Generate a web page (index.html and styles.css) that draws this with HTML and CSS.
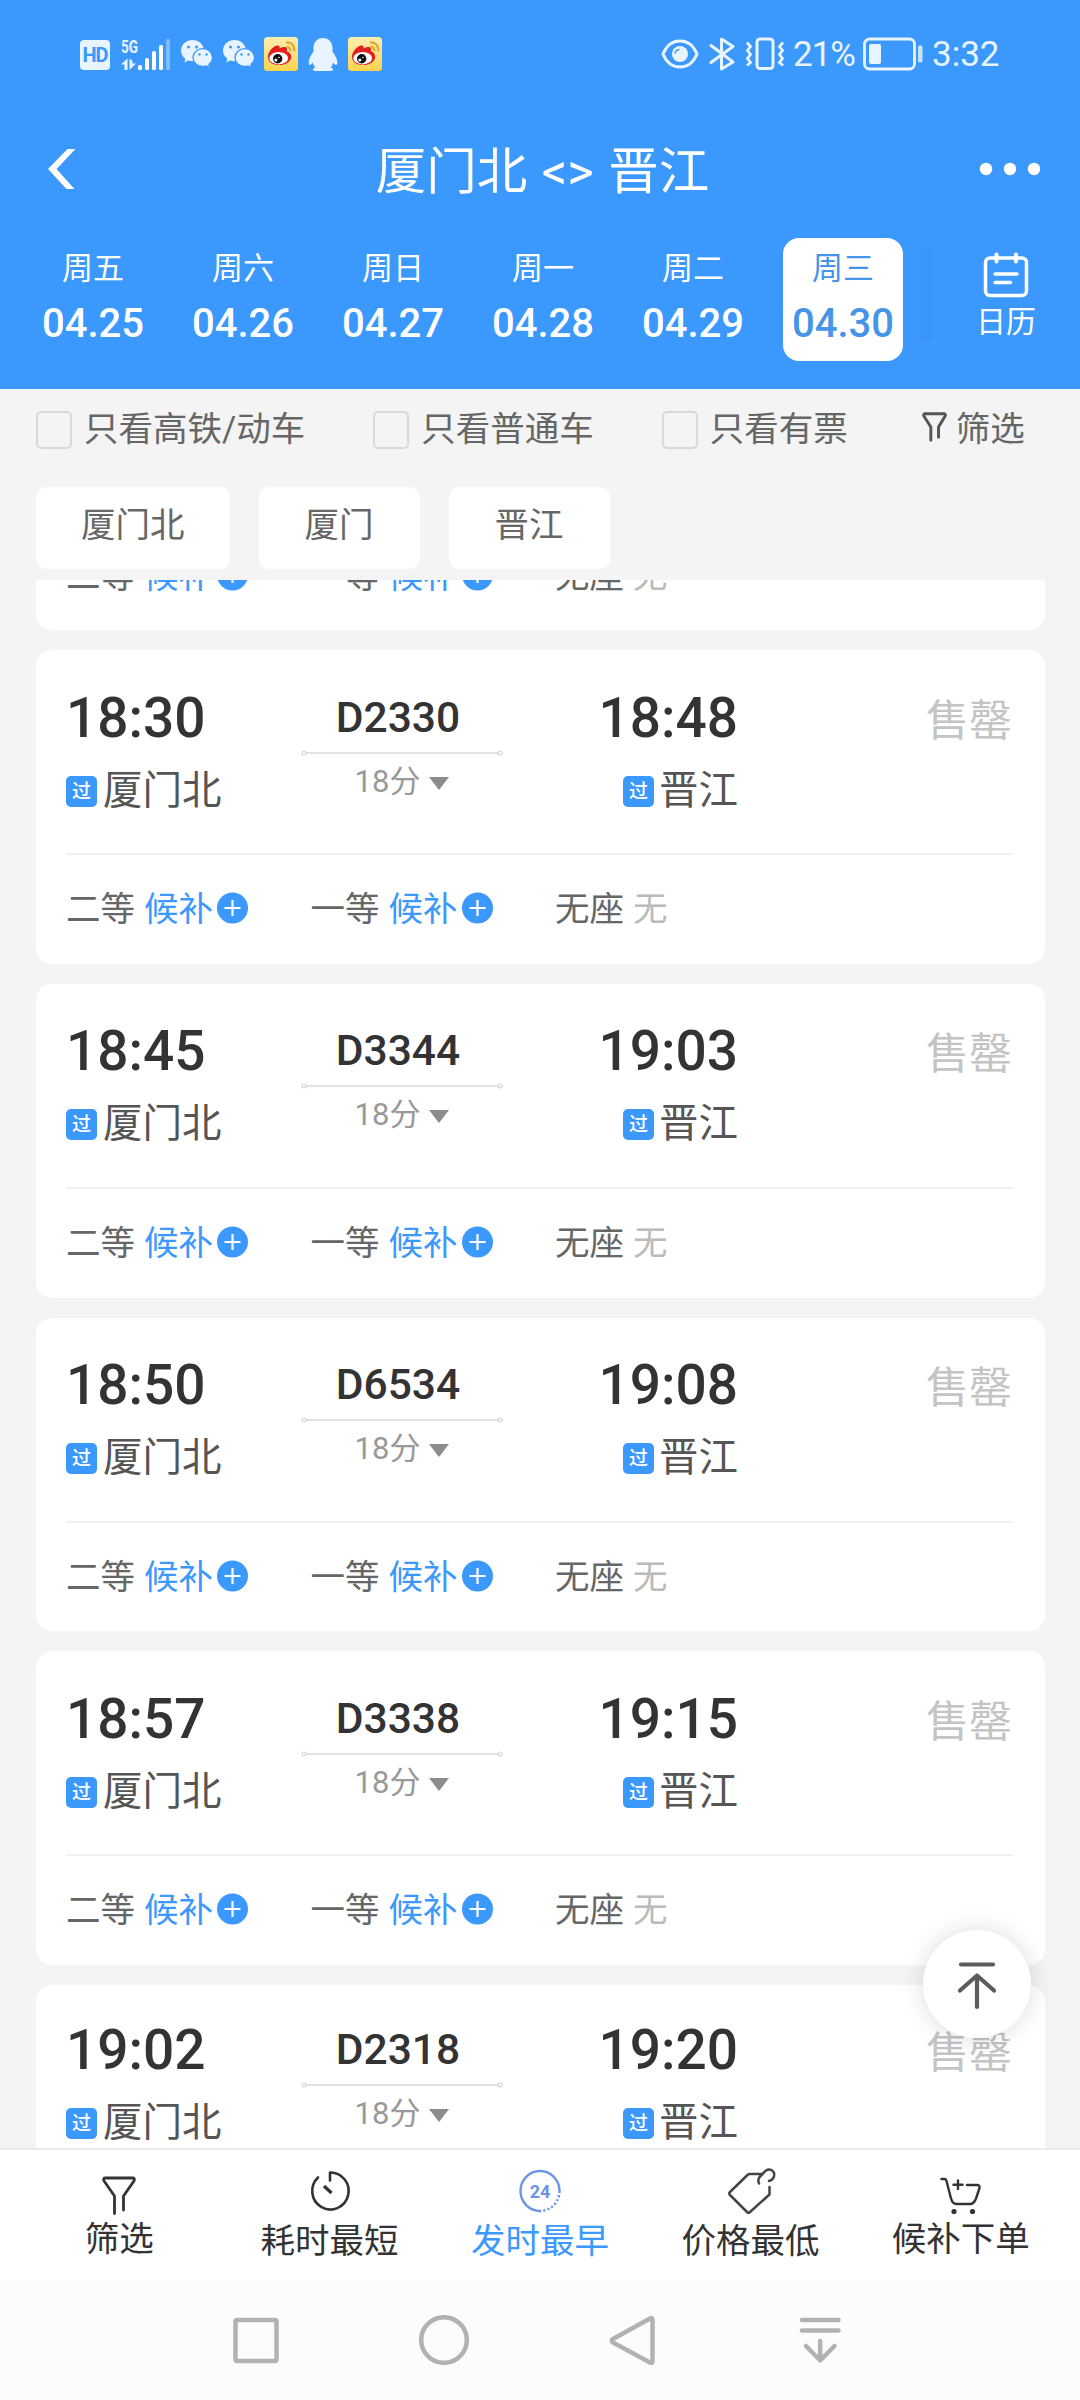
FILE: index.html
```
<!DOCTYPE html>
<html lang="zh-CN">

<head>
    <meta charset="UTF-8">
    <meta name="viewport" content="width=device-width, initial-scale=1.0">
    <title>厦门北 - 晋江</title>
    <link rel="stylesheet" href="styles.css">
</head>

<body>
    <svg class="symbols" width="0" height="0">
        <symbol id="wechat" viewBox="0 0 32 28">
            <path fill="#e8f4ff" d="M11.500 0C5.200 0 0 4.600 0 10.600c0 3.400 1.700 6.300 4.300 8.200L3.300 22.500l4-2c1.400.5 2.700.7 4.200.7 6.300 0 11.500-4.700 11.500-10.600S17.800 0 11.500 0z" />
            <circle cx="7.500" cy="7" r="1.500" fill="#3b98fc" />
            <circle cx="15.500" cy="7" r="1.500" fill="#3b98fc" />
            <path fill="#e8f4ff" stroke="#3b98fc" stroke-width="1.300" d="M21.800 8.600c-5.400 0-9.800 3.900-9.800 8.900s4.400 9 9.800 9c1.300 0 2.300-.2 3.500-.6l3.400 1.800-.8-3.300c2.200-1.600 3.600-4 3.600-6.900 0-5-4.300-8.900-9.700-8.900z" />
            <circle cx="18.500" cy="14.500" r="1.200" fill="#3b98fc" />
            <circle cx="25.500" cy="14.500" r="1.200" fill="#3b98fc" />
        </symbol>
        <symbol id="weibo" viewBox="0 0 34 34">
            <defs>
                <linearGradient id="weiboBg" x1="0" y1="0" x2="0" y2="1">
                    <stop offset="0" stop-color="#fbeeb4" />
                    <stop offset="1" stop-color="#fdd24c" />
                </linearGradient>
            </defs>
            <rect width="34" height="34" rx="3.500" fill="url(#weiboBg)" />
            <path fill="#e21f1f" d="M4 20c0-5 4.500-10.500 9-11.500 2-.5 3.200 1 2.600 3 2.800-1.600 6.800-2.300 7.400.2.300 1-.2 2-.2 2.600 2.500.8 4.400 2.500 4.400 5.400 0 5-5.700 8.300-12 8.300C8.500 28 4 25 4 20z" />
            <ellipse cx="14.700" cy="21.200" rx="9.300" ry="6.200" fill="#fff" />
            <circle cx="13.700" cy="21.700" r="4.700" fill="#111" />
            <circle cx="11.900" cy="23.100" r="1.500" fill="#fff" />
            <circle cx="15" cy="20.500" r=".8" fill="#fff" />
            <path fill="none" stroke="#e0a930" stroke-width="2.200" d="M22 5.500c5-.8 9 3.200 8.200 9M22.500 10c2.600-.4 4.200 1.600 3.800 4.200" />
        </symbol>
        <symbol id="funnel" viewBox="0 0 34 40">
            <path fill="none" stroke="currentColor" stroke-width="2.800" stroke-linejoin="round" stroke-linecap="round" d="M12.500 37.500V20L1.900 4.800Q.9 2 3.500 2h27q2.600 0 1.600 2.800L21.500 20v14" />
        </symbol>
        <symbol id="line" viewBox="0 0 202 6">
            <path d="M5 3h192" stroke="#d8d8d8" stroke-width="1.500" />
            <circle cx="3" cy="3" r="2" fill="#fff" stroke="#d3d3d3" stroke-width="1.200" />
            <circle cx="199" cy="3" r="2" fill="#fff" stroke="#d3d3d3" stroke-width="1.200" />
        </symbol>
        <symbol id="plus" viewBox="0 0 31 31">
            <circle cx="15.500" cy="15.500" r="15.500" fill="#3b98fc" />
            <path d="M15.500 7.500v16M7.500 15.500h16" stroke="#fff" stroke-width="2.200" />
        </symbol>
    </svg>

    <header class="header">
        <div class="status-bar">
            <div class="status-left">
                <span class="hd">HD</span>
                <svg class="signal" width="50" height="34" viewBox="0 0 50 34">
                    <text x="0" y="15.500" textLength="17" lengthAdjust="spacingAndGlyphs" class="signal-text">5G</text>
                    <path fill="#e8f4ff" d="M0 27.500L6.500 21.500V33H3.500V27.500zM8.500 21.500L11.500 24V26.500H15L8.500 33z" />
                    <rect x="17" y="28" width="4" height="5" rx="1.500" fill="#fff" />
                    <rect x="24" y="21" width="4" height="12" rx="1.500" fill="#fff" />
                    <rect x="31" y="14" width="4" height="19" rx="1.500" fill="#fff" />
                    <rect x="38" y="8" width="4" height="25" rx="1.500" fill="#fff" />
                    <rect x="45" y="2" width="4" height="31" rx="1.500" fill="#7fbcfd" />
                </svg>
                <svg class="wechat" width="32" height="28"><use href="#wechat" /></svg>
                <svg class="wechat" width="32" height="28"><use href="#wechat" /></svg>
                <svg class="weibo" width="34" height="34"><use href="#weibo" /></svg>
                <svg class="qq" width="30" height="33" viewBox="0 0 30 33">
                    <path fill="#e8f4ff" d="M15 0C9 0 5.500 4.500 5.500 10v3.500C3 17 .7 21 .7 24.500c0 1.300.5 2.500 1.300 2.500.9 0 1.800-1 2.700-2.500.5 2 1.400 3.600 2.700 5-1.800.5-2.700 1.200-2.700 2 0 1 2 1.500 5 1.500h10.600c3 0 5-.5 5-1.500 0-.8-.9-1.500-2.700-2 1.300-1.400 2.200-3 2.700-5 .9 1.500 1.800 2.500 2.700 2.500.8 0 1.300-1.200 1.300-2.500 0-3.500-2.300-7.500-4.800-11V10C24.500 4.500 21 0 15 0z" />
                </svg>
                <svg class="weibo" width="34" height="34"><use href="#weibo" /></svg>
            </div>
            <div class="status-right">
                <svg class="eye" width="38" height="30" viewBox="0 0 38 30">
                    <path fill="none" stroke="#e8f4ff" stroke-width="3" d="M2 15C5.500 6.500 11.500 2 19 2s13.500 4.500 17 13c-3.500 8.500-9.500 13-17 13S5.500 23.500 2 15z" />
                    <circle cx="19" cy="15" r="8" fill="#e8f4ff" />
                    <path fill="none" stroke="#3b98fc" stroke-width="1.500" d="M14 14.500a5 5 0 0 1 4.500-4" />
                </svg>
                <svg class="bluetooth" width="26" height="34" viewBox="0 0 26 34">
                    <path fill="none" stroke="#e8f4ff" stroke-width="3" stroke-linejoin="round" stroke-linecap="round" d="M2 8.500L24 25 12.500 32V2L24 9.500 2 25.500" />
                </svg>
                <svg class="vibrate" width="40" height="34" viewBox="0 0 40 34">
                    <rect x="12" y="2" width="16" height="29.500" rx="3" fill="none" stroke="#e8f4ff" stroke-width="3" />
                    <path fill="none" stroke="#e8f4ff" stroke-width="2.800" d="M2 5.500l3.500 4-3 4 3 4-3 4 3 4-3.500 3M38 5.500l-3.500 4 3 4-3 4 3 4-3 4 3.500 3" />
                </svg>
                <span class="percent">21%</span>
                <svg class="battery" width="60" height="34" viewBox="0 0 60 34">
                    <rect x="1.500" y="2" width="50" height="30" rx="5" fill="none" stroke="#e8f4ff" stroke-width="2.800" />
                    <rect x="6" y="7" width="12" height="20" rx="2" fill="#e8f4ff" />
                    <rect x="55" y="8.500" width="4.500" height="17" rx="1.500" fill="#c9e2fe" />
                </svg>
                <span class="clock">3:32</span>
            </div>
        </div>

        <div class="title-bar">
            <svg width="28" height="42" viewBox="0 0 28 42">
                <path fill="#fff" d="M19.500 1H27.500L8.500 21 26.500 41H18.500L0 21z" />
            </svg>
            <h1>厦门北 &lt;&gt; 晋江</h1>
            <svg width="62" height="14" viewBox="0 0 62 14">
                <circle cx="7" cy="7" r="6.200" fill="#fff" />
                <circle cx="31" cy="7" r="6.200" fill="#fff" />
                <circle cx="55" cy="7" r="6.200" fill="#fff" />
            </svg>
        </div>

        <div class="dates">
            <div class="date"><span>周五</span><b>04.25</b></div>
            <div class="date"><span>周六</span><b>04.26</b></div>
            <div class="date"><span>周日</span><b>04.27</b></div>
            <div class="date"><span>周一</span><b>04.28</b></div>
            <div class="date"><span>周二</span><b>04.29</b></div>
            <div class="date active"><span>周三</span><b>04.30</b></div>
            <div class="shade"></div>
            <div class="calendar">
                <svg width="46" height="46" viewBox="0 0 46 46">
                    <rect x="2.500" y="6" width="41" height="37.500" rx="4.500" fill="none" stroke="#fff" stroke-width="3.500" />
                    <path stroke="#fff" stroke-width="4" stroke-linecap="round" d="M13.500 2.500v7M33 2.500v7" />
                    <path stroke="#fff" stroke-width="3.500" stroke-linecap="round" d="M12 22h22M12 30.500h15.500" />
                </svg>
                <span>日历</span>
            </div>
        </div>
    </header>

    <div class="filters">
        <label class="filter"><i class="box"></i>只看高铁/动车</label>
        <label class="filter"><i class="box"></i>只看普通车</label>
        <label class="filter"><i class="box"></i>只看有票</label>
        <div class="filter more">
            <svg width="25" height="30" viewBox="0 0 34 40">
                <path fill="none" stroke="#555" stroke-width="4" stroke-linejoin="round" stroke-linecap="round" d="M12 38V20L2.500 5Q1.500 2 4.500 2h25q3 0 2 3L22.500 20v14" />
            </svg>筛选
        </div>
    </div>

    <div class="chips">
        <div class="chip">厦门北</div>
        <div class="chip">厦门</div>
        <div class="chip">晋江</div>
    </div>

    <main class="list">
        <div class="list-inner" id="trains"></div>
        <div class="to-top">
            <svg width="42" height="54" viewBox="0 0 42 54">
                <path fill="none" stroke="#5c5c5c" stroke-width="4.200" stroke-linecap="round" stroke-linejoin="round" d="M5 7.500h32M21 50V19M4 33.500L21 18.500l17 15" />
            </svg>
        </div>
    </main>

    <footer class="tabs">
        <div class="tab">
            <svg class="i-funnel" width="34" height="40"><use href="#funnel" /></svg>
            <span>筛选</span>
        </div>
        <div class="tab low">
            <svg width="48" height="48" viewBox="0 0 48 48">
                <path fill="none" stroke="#333" stroke-width="2.600" stroke-linecap="round" stroke-linejoin="round" d="M24 12.500V4.500A18.200 18.500 0 1 1 12 9.500" />
                <path stroke="#333" stroke-width="3.200" d="M18 18l7.500 7" />
            </svg>
            <span>耗时最短</span>
        </div>
        <div class="tab low active">
            <svg width="48" height="48" viewBox="0 0 48 48">
                <path fill="none" stroke="#6d93e8" stroke-width="2.400" d="M24 43A19.500 20 0 1 1 43.500 23" />
                <path fill="none" stroke="#6d93e8" stroke-width="2.400" stroke-dasharray="2.200 2" d="M43.500 23A19.500 20 0 0 1 24 43" />
                <text x="24" y="29.500" text-anchor="middle" class="hours">24</text>
            </svg>
            <span>发时最早</span>
        </div>
        <div class="tab low">
            <svg width="48" height="48" viewBox="0 0 48 48">
                <path fill="none" stroke="#444" stroke-width="2.500" stroke-linecap="round" stroke-linejoin="round" d="M36 6H23.500Q22.500 6 21.500 7L4 24q-1.500 1.500 0 3L21 44q1.500 1.500 3 0L43.500 26.500V19M33 15.500C31 10.500 34 8.500 37 5.500 40 1.500 43 .5 46 2.500s2.500 5.500 1 8c-1 1.500-2.500 2.200-4 2.500" />
            </svg>
            <span>价格最低</span>
        </div>
        <div class="tab">
            <svg class="i-cart" width="42" height="38" viewBox="0 0 42 38">
                <path fill="none" stroke="#333" stroke-width="2.400" stroke-linecap="round" stroke-linejoin="round" d="M1.500 2H5Q6 2 6.500 4L11 21.500q1.500 5.500 5.500 5.500h13.500q4 0 6-5.500l3.500-10.500q.5-3-2.500-3H27M18 3.500v8.500M13.500 7.700h9" />
                <circle cx="14" cy="34.500" r="2.600" fill="#333" />
                <circle cx="32.500" cy="34.500" r="2.600" fill="#333" />
            </svg>
            <span>候补下单</span>
        </div>
    </footer>

    <nav class="sys-nav">
        <svg width="50" height="50" viewBox="0 0 50 50"><rect x="4.500" y="5" width="41" height="41" rx="1.500" /></svg>
        <svg width="50" height="50" viewBox="0 0 50 50"><circle cx="25" cy="25" r="22.800" /></svg>
        <svg width="50" height="50" viewBox="0 0 50 50"><path d="M43 3.500Q45.500 2 45.500 5v41q0 3-2.500 1.500L6 27.500Q3.500 25.500 6 24z" /></svg>
        <svg width="50" height="50" viewBox="0 0 50 50"><path d="M7 5h36.500M7 15.500h36.500M25.200 26v19M11 31l14.200 14.500L39.500 31" /></svg>
    </nav>

    <script>
        const trains = [
            { no: 'D2330', start: '18:30', end: '18:48' },
            { no: 'D3344', start: '18:45', end: '19:03' },
            { no: 'D6534', start: '18:50', end: '19:08' },
            { no: 'D3338', start: '18:57', end: '19:15' },
            { no: 'D2318', start: '19:02', end: '19:20' }
        ];

        const plus = '<svg width="31" height="32"><use href="#plus" /></svg>';

        const seats = `
            <div class="seats">
                <div class="seat">二等<span class="wait">候补</span>${plus}</div>
                <div class="seat">一等<span class="wait">候补</span>${plus}</div>
                <div class="seat">无座<span class="none">无</span></div>
            </div>`;

        const trip = t => `
            <div class="trip">
                <div class="stop">
                    <div class="time">${t.start}</div>
                    <div class="station"><i class="pass">过</i>厦门北</div>
                </div>
                <div class="middle">
                    <div class="no">${t.no}</div>
                    <svg width="202" height="6"><use href="#line" /></svg>
                    <div class="duration">18分<i class="arrow"></i></div>
                </div>
                <div class="stop end">
                    <div class="time">${t.end}</div>
                    <div class="station"><i class="pass">过</i>晋江</div>
                </div>
                <div class="sold-out">售罄</div>
            </div>`;

        // 首尾两张卡片只渲染可见的一半
        document.getElementById('trains').innerHTML =
            `<div class="card half">${seats}</div>` +
            trains.map((t, i) => `
                <div class="card">
                    ${trip(t)}
                    ${i < trains.length - 1 ? seats : ''}
                </div>
            `).join('');
    </script>
</body>

</html>
```
FILE: styles.css
```
* {
    box-sizing: border-box;
}

body {
    width: 1080px;
    height: 2400px;
    margin: 0;
    display: flex;
    flex-direction: column;
    overflow: hidden;
    background-color: #f4f4f4;
    color: #333;
    font-family: Roboto, "Noto Sans CJK SC", sans-serif;
}

svg {
    display: block;
    flex: none;
}

i {
    font-style: normal;
}

.symbols {
    position: absolute;
}

/* 顶部 */
.header {
    height: 389px;
    background-color: #3b98fc;
    color: #fff;
}

.status-bar {
    height: 108px;
    padding: 0 80px;
    display: flex;
    justify-content: space-between;
    align-items: center;
    color: #e8f4ff;
}

.status-left,
.status-right {
    display: flex;
    align-items: center;
}

.hd {
    width: 30px;
    height: 30px;
    margin: 2px 11px 0 0;
    border-radius: 4px;
    background-color: #e8f4ff;
    color: #3b98fc;
    font-size: 20px;
    font-weight: 700;
    line-height: 30px;
    text-align: center;
    letter-spacing: -1px;
}

.signal {
    margin-right: 10px;
}

.signal-text {
    font-size: 19px;
    font-weight: 700;
    fill: #e8f4ff;
}

.wechat {
    margin-right: 10px;
}

.wechat + .weibo {
    margin: 0 10px 0 -1px;
}

.qq {
    margin-right: 10px;
}

.eye {
    margin-right: 10px;
}

.bluetooth {
    margin-right: 10px;
}

.vibrate {
    margin-right: 8px;
}

.percent,
.clock {
    margin-top: 2px;
    font-size: 35px;
    line-height: 40px;
}

.percent {
    width: 70px;
    letter-spacing: -1px;
}

.battery {
    margin-right: 9px;
}

.clock {
    width: 68px;
    white-space: nowrap;
}

.title-bar {
    height: 122px;
    padding: 0 39px 0 48px;
    display: flex;
    align-items: center;
    justify-content: space-between;
}

h1 {
    margin: 6px 0 0 30px;
    font-size: 50.5px;
    font-weight: 400;
    line-height: 60px;
    word-spacing: 2px;
}

.dates {
    height: 159px;
    padding: 8px 0 0 33px;
    display: flex;
    align-items: flex-start;
}

.date {
    width: 120px;
    height: 123px;
    margin-right: 30px;
    padding-top: 12px;
    display: flex;
    flex-direction: column;
    align-items: center;
    border-radius: 16px;
}

.date span {
    font-size: 31px;
    line-height: 38px;
}

.date b {
    margin-top: 13px;
    font-size: 40px;
    font-weight: 500;
    line-height: 46px;
}

.date.active {
    margin-right: 15px;
    background-color: #fff;
    color: #4694e8;
}

.shade {
    width: 14px;
    height: 92px;
    margin-top: 11px;
    background: linear-gradient(to right, #3b98fc, #3a92f3);
}

.calendar {
    margin: 14px 0 0 44px;
    display: flex;
    flex-direction: column;
    align-items: center;
}

.calendar span {
    margin-top: 6px;
    font-size: 30px;
    line-height: 36px;
}

/* 筛选条件 */
.filters {
    height: 98px;
    padding: 0 50px 0 36px;
    display: flex;
    align-items: flex-start;
    color: #666;
    font-size: 34.5px;
    line-height: 42px;
}

.filter {
    display: flex;
    padding-top: 19px;
    margin-right: 68px;
    white-space: nowrap;
}

.filter.more {
    margin: 0 0 0 6px;
}

.filter.more svg {
    margin: 4px 9px 0 0;
}

.box {
    width: 36px;
    height: 38px;
    margin: 3px 12px 0 0;
    border: 2px solid #d9d9d9;
    border-radius: 5px;
}

.chips {
    height: 93px;
    padding-left: 36px;
    display: flex;
}

.chip {
    height: 82px;
    min-width: 161px;
    margin-right: 29px;
    padding: 0 45px;
    border-radius: 10px;
    background-color: #fff;
    color: #666;
    font-size: 34.5px;
    line-height: 77px;
    text-align: center;
}

/* 车次列表 */
.list {
    position: relative;
    height: 1568px;
    overflow: hidden;
}

.list-inner {
    padding: 0 35px 0 36px;
}

.card {
    height: 313.6px;
    margin-bottom: 20px;
    padding: 0 32px 0 30px;
    border-radius: 16px;
    background-color: #fff;
}

.card.half {
    height: 50.4px;
    display: flex;
    align-items: flex-end;
    border-radius: 0 0 16px 16px;
}

.trip {
    height: 205px;
    padding-top: 35.5px;
    display: flex;
    border-bottom: 2px solid #f1f1f1;
}

.card:last-child .trip {
    padding-top: 33px;
}

.stop {
    width: 235px;
}

.stop.end {
    display: flex;
    flex-direction: column;
    align-items: flex-end;
}

.time {
    font-size: 55px;
    font-weight: 500;
    line-height: 64px;
}

.station {
    margin-top: 19px;
    display: flex;
    color: #555;
    font-size: 39.5px;
    line-height: 44px;
}

.pass {
    width: 31px;
    height: 31px;
    margin: 7px 6px 0 0;
    border-radius: 5px;
    background-color: #3b98fc;
    color: #fff;
    font-size: 19px;
    font-weight: 500;
    line-height: 32px;
    text-align: center;
}

.end .pass {
    margin-right: 5px;
}

.middle {
    width: 202px;
    text-align: center;
}

.no {
    padding-right: 8px;
    font-size: 42.5px;
    font-weight: 500;
    line-height: 64px;
}

.duration {
    margin-top: 8px;
    display: flex;
    justify-content: center;
    align-items: center;
    color: #999;
    font-size: 31px;
    line-height: 36px;
}

.arrow {
    margin: 3px 0 0 9px;
    border: 10px solid transparent;
    border-top: 13px solid #8c8c8c;
    border-bottom: 0;
}

.sold-out {
    margin: 3px 1px 0 auto;
    color: #c4c4c4;
    font-size: 43px;
    line-height: 64px;
}

.seats {
    height: 108px;
    flex: none;
    display: flex;
    color: #666;
    font-size: 34.5px;
    line-height: 42px;
}

.seat {
    width: 244.5px;
    display: flex;
    align-items: center;
}

.seat svg {
    margin: 0 0 2px 4px;
}

.wait,
.none {
    margin-left: 9px;
}

.wait {
    color: #3b98fc;
}

.none {
    color: #bbb;
}

.to-top {
    position: absolute;
    right: 49px;
    bottom: 110px;
    width: 108px;
    height: 108px;
    display: flex;
    align-items: center;
    justify-content: center;
    border-radius: 50%;
    background-color: #fff;
    box-shadow: 0 0 24px rgba(0, 0, 0, 0.14);
}

/* 底部排序 */
.tabs {
    height: 133px;
    padding: 0 14px;
    display: flex;
    border-top: 2px solid #eaeaea;
    background-color: #fff;
}

.tab {
    flex: 1;
    display: flex;
    flex-direction: column;
    align-items: center;
    justify-content: flex-end;
    padding-bottom: 21px;
    font-size: 34.5px;
    line-height: 42px;
}

.tab.low {
    padding-bottom: 19px;
}

.tab.low svg {
    margin-bottom: 4px;
    overflow: visible;
}

.tab.active {
    color: #3b98fc;
}

.i-funnel {
    margin-bottom: 2px;
}

.i-cart {
    margin-bottom: 3px;
}

.hours {
    font-size: 18px;
    font-weight: 700;
    fill: #6d93e8;
}

/* 系统导航 */
.sys-nav {
    height: 119px;
    padding: 34px 0 0 231px;
    display: flex;
    gap: 138px;
    background-color: #fcfcfc;
}

.sys-nav svg {
    fill: none;
    stroke: #b2b2b2;
    stroke-width: 4.5;
    stroke-linecap: round;
    stroke-linejoin: round;
}
```
